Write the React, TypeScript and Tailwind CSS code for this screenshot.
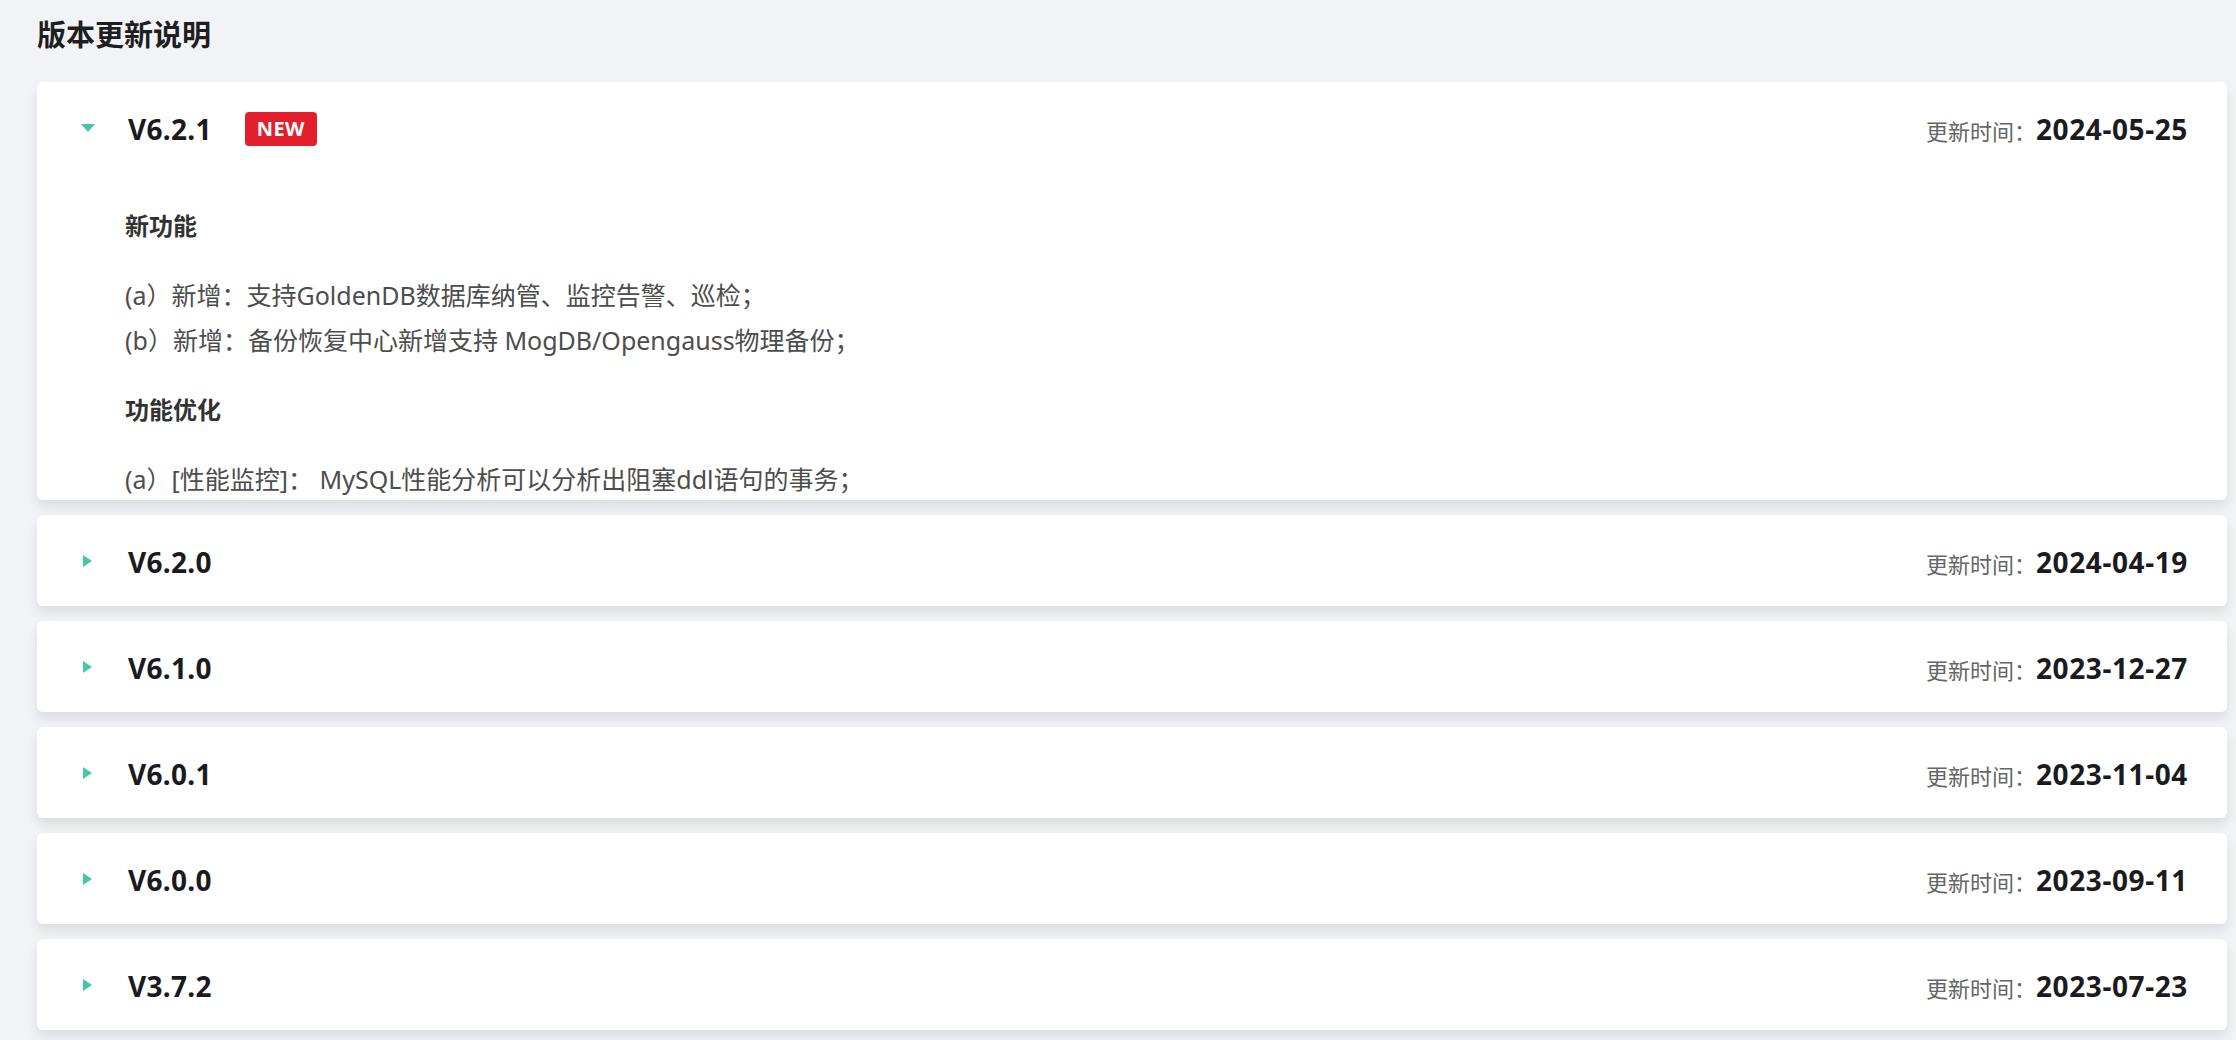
import React from "react"

type Release = {
  version: string
  date: string
  isNew?: boolean
  open?: boolean
}

const releases: Release[] = [
  { version: "V6.2.1", date: "2024-05-25", isNew: true, open: true },
  { version: "V6.2.0", date: "2024-04-19" },
  { version: "V6.1.0", date: "2023-12-27" },
  { version: "V6.0.1", date: "2023-11-04" },
  { version: "V6.0.0", date: "2023-09-11" },
  { version: "V3.7.2", date: "2023-07-23" },
]

const sections = [
  {
    title: "新功能",
    items: [
      "(a）新增：支持GoldenDB数据库纳管、监控告警、巡检；",
      "(b）新增：备份恢复中心新增支持 MogDB/Opengauss物理备份；",
    ],
  },
  {
    title: "功能优化",
    items: ["(a）[性能监控]： MySQL性能分析可以分析出阻塞ddl语句的事务；"],
  },
]

function Caret({ open }: { open?: boolean }) {
  // small teal triangle, down when expanded
  return open ? (
    <svg width="16" height="10" viewBox="0 0 16 10" className="shrink-0">
      <path d="M1 1 L15 1 L8 9 Z" fill="#45c6ab" />
    </svg>
  ) : (
    <svg width="11" height="14" viewBox="0 0 11 14" className="shrink-0 ml-[2px] mr-[3px]">
      <path d="M1 1 L10 7 L1 13 Z" fill="#45c6ab" />
    </svg>
  )
}

function ReleaseCard({ release }: { release: Release }) {
  return (
    <div
      className={
        release.open
          ? "bg-white rounded-[6px] shadow-[0_7px_12px_rgba(0,0,0,0.09)] h-[418px] overflow-hidden"
          : "bg-white rounded-[6px] shadow-[0_7px_12px_rgba(0,0,0,0.09)]"
      }
    >
      <div className="h-[91px] flex items-center pl-[43px] pr-[39px]">
        <div className="w-[16px] flex items-center">
          <Caret open={release.open} />
        </div>
        <span className="ml-[32px] text-[28px] font-bold text-[#1b1b1f] pt-[3px] tracking-[0.3px]">
          {release.version}
        </span>
        {release.isNew && (
          <span className="ml-[33px] mt-[2px] h-[34px] w-[72px] rounded-[4px] bg-[#e41f2d] text-white text-[20px] font-bold flex items-center justify-center tracking-[0.5px]">
            NEW
          </span>
        )}
        <div className="ml-auto flex items-baseline pt-[3px]">
          <span className="text-[22px] text-[#666]">更新时间：</span>
          <span className="text-[28px] font-bold text-[#1b1b1f] tracking-[0.6px]">{release.date}</span>
        </div>
      </div>
      {release.open && (
        <div className="pl-[88px] pr-[40px] pt-[6px]">
          {sections.map((s) => (
            <div key={s.title}>
              <h4 className="mt-[27px] text-[24px] leading-[40px] font-bold text-[#333]">{s.title}</h4>
              <ul className="mt-[27px]">
                {s.items.map((item) => (
                  <li key={item} className="text-[25px] leading-[45px] text-[#4d4d4d]">
                    {item}
                  </li>
                ))}
              </ul>
            </div>
          ))}
        </div>
      )}
    </div>
  )
}

export default function App() {
  return (
    <div
      className="min-h-screen bg-[#f2f3f6] pl-[37px] pr-[9px]"
      style={{ fontFamily: '"Noto Sans", "Noto Sans CJK SC", sans-serif' }}
    >
      <h2 className="pt-[15px] text-[29px] leading-[40px] font-semibold text-[#1f1f22]">版本更新说明</h2>
      <div className="mt-[27px] flex flex-col gap-[15px] pb-[20px]">
        {releases.map((r) => (
          <ReleaseCard key={r.version} release={r} />
        ))}
      </div>
    </div>
  )
}
